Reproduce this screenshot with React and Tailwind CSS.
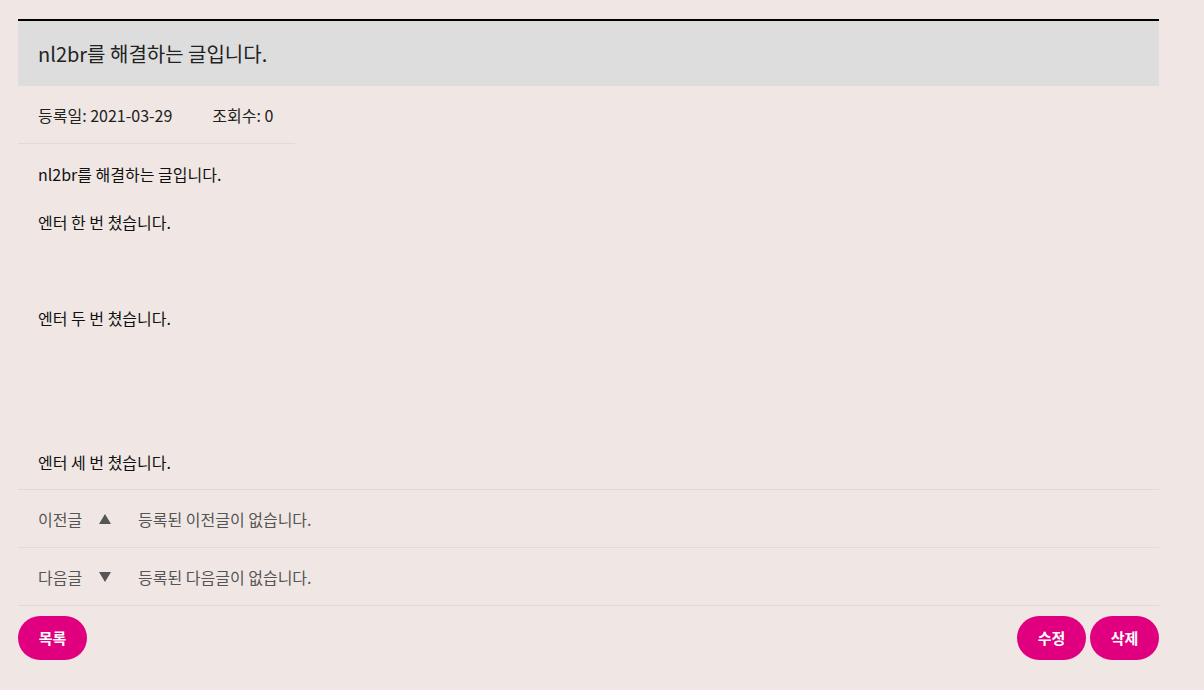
export default function App() {
  const body = [
    "nl2br를 해결하는 글입니다.",
    "",
    "엔터 한 번 쳤습니다.",
    "",
    "",
    "",
    "엔터 두 번 쳤습니다.",
    "",
    "",
    "",
    "",
    "",
    "엔터 세 번 쳤습니다.",
  ];

  return (
    <div className="min-h-[690px] bg-[#f0e7e4] pt-[19px] font-['Noto_Sans_CJK_KR','Noto_Sans',sans-serif] text-[#222]">
      <div className="mx-[18px] w-[1141px]">
        <div className="border-t-2 border-black bg-[#dddddd] px-5">
          <h1 className="flex h-[65px] items-center text-[20px] font-normal text-[#222]">
            nl2br를 해결하는 글입니다.
          </h1>
        </div>

        <div className="inline-flex h-[58px] items-center gap-[40px] border-b border-[#dcdcdc] pl-5 pr-[22px] text-[16px] text-[#222]">
          <span>등록일: 2021-03-29</span>
          <span>조회수: 0</span>
        </div>

        <div className="px-5 pt-[18px] pb-[15px] text-[16px] leading-6 text-[#111]">
          {body.map((line, i) => (
            <div key={i} className="h-6">
              {line}
            </div>
          ))}
        </div>

        <div className="border-t border-[#dcdcdc] text-[16px] text-[#555]">
          <div className="flex h-[58px] items-center border-b border-[#dcdcdc] px-5">
            <span className="w-[61px]">이전글</span>
            <svg width="12" height="10" viewBox="0 0 12 10" className="mr-[27px]">
              <path d="M6 0 L12 10 L0 10 Z" fill="#555" />
            </svg>
            <span>등록된 이전글이 없습니다.</span>
          </div>
          <div className="flex h-[58px] items-center border-b border-[#dcdcdc] px-5">
            <span className="w-[61px]">다음글</span>
            <svg width="12" height="10" viewBox="0 0 12 10" className="mr-[27px]">
              <path d="M0 0 L12 0 L6 10 Z" fill="#555" />
            </svg>
            <span>등록된 다음글이 없습니다.</span>
          </div>
        </div>

        <div className="mt-[10px] flex items-center justify-between">
          <button className="h-[44px] w-[69px] rounded-full bg-[#e0007f] text-[15px] font-bold text-white">
            목록
          </button>
          <div className="flex gap-1">
            <button className="h-[44px] w-[69px] rounded-full bg-[#e0007f] text-[15px] font-bold text-white">
              수정
            </button>
            <button className="h-[44px] w-[69px] rounded-full bg-[#e0007f] text-[15px] font-bold text-white">
              삭제
            </button>
          </div>
        </div>
      </div>
    </div>
  );
}
